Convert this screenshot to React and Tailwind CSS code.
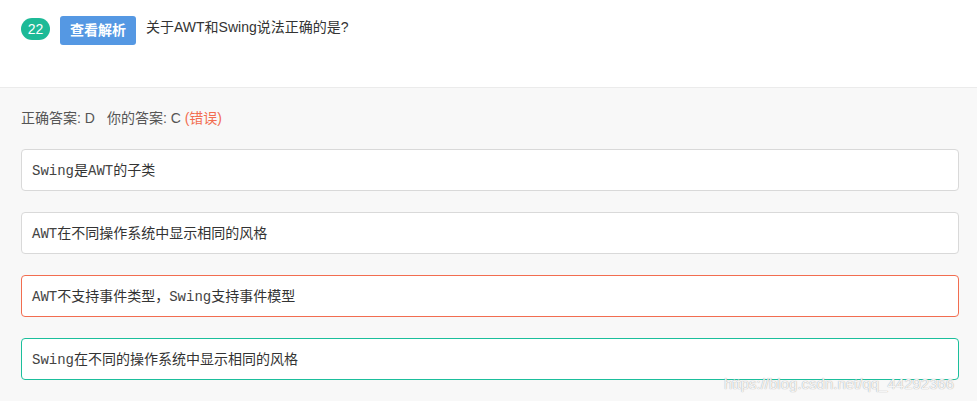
import React from 'react';

const options = [
  { key: 'A', parts: [['m', 'Swing'], ['c', '是'], ['m', 'AWT'], ['c', '的子类']], state: 'none' },
  { key: 'B', parts: [['m', 'AWT'], ['c', '在不同操作系统中显示相同的风格']], state: 'none' },
  { key: 'C', parts: [['m', 'AWT'], ['c', '不支持事件类型，'], ['m', 'Swing'], ['c', '支持事件模型']], state: 'wrong' },
  { key: 'D', parts: [['m', 'Swing'], ['c', '在不同的操作系统中显示相同的风格']], state: 'right' },
];

const borderFor = {
  none: 'border-[#d9d9d9]',
  wrong: 'border-[#f26d50]',
  right: 'border-[#1bbf9c]',
};

export default function App() {
  return (
    <div className="relative w-[977px] h-[401px] overflow-hidden bg-[#f8f8f8] text-[#333] font-['Liberation_Sans','Noto_Sans_CJK_SC',sans-serif]">
      <div className="h-[88px] bg-white border-b border-[#ebebeb] px-[21px] pt-[16px] flex items-start gap-[10px]">
        <span className="mt-[2px] h-[22px] w-[29px] rounded-full bg-[#1dba97] text-white text-[14px] leading-[22px] text-center">22</span>
        <button className="h-[29px] w-[76px] rounded-[3px] bg-[#5598e3] text-white text-[14px] font-bold">查看解析</button>
        <p className="text-[14px] leading-[22px] text-[#333]">关于AWT和Swing说法正确的是?</p>
      </div>

      <div className="px-[21px] pt-[21px]">
        <p className="text-[14px] leading-[18px] text-[#555]">
          正确答案: D<span className="ml-[12px]">你的答案: C</span>{' '}
          <span className="text-[#f26d50]">(错误)</span>
        </p>

        <div className="mt-[22px] flex flex-col gap-[21px] w-[938px]">
          {options.map((o) => (
            <div
              key={o.key}
              className={`h-[42px] rounded-[4px] border bg-white px-[10px] flex items-center text-[14px] text-[#333] ${borderFor[o.state]}`}
            >
              <p className="leading-[20px]">
                {o.parts.map(([t, s], i) => (
                  <span
                    key={i}
                    className={t === 'm' ? "font-['Liberation_Mono',monospace] text-[14px] text-[#444]" : "font-['Noto_Sans_CJK_SC',sans-serif]"}
                  >
                    {s}
                  </span>
                ))}
              </p>
            </div>
          ))}
        </div>
      </div>

      <span className="absolute left-[724px] top-[373px] text-[15px] text-white/90 [text-shadow:0_0_1px_#888] font-['Liberation_Sans',sans-serif]">
        https://blog.csdn.net/qq_44292366
      </span>
    </div>
  );
}
